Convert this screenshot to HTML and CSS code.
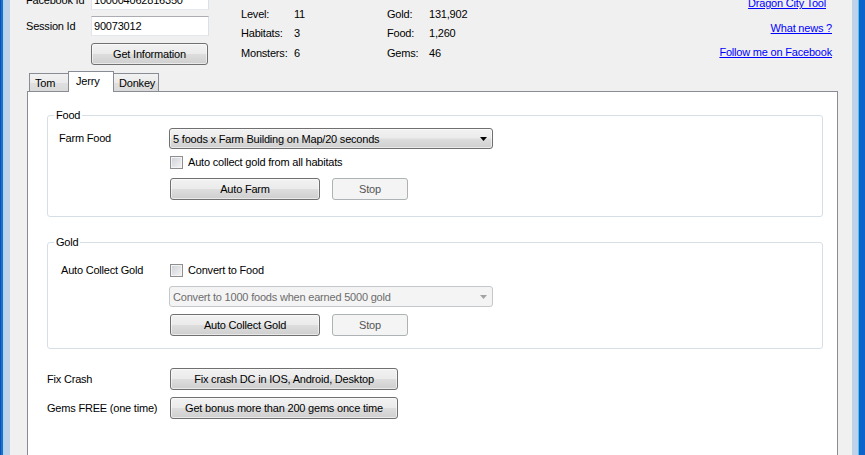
FILE: index.html
```html
<!DOCTYPE html>
<html lang="en">
<head>
    <meta charset="UTF-8">
    <title>Dragon City Tool</title>
    <link rel="stylesheet" href="styles.css">
</head>
<body>
    <div class="window">
        <div class="frame-left"></div>

        <div class="client">
            <!-- account + summary -->
            <div class="top">
                <div class="login">
                    <div class="field">
                        <label for="fbid">Facebook Id</label>
                        <input class="textbox" id="fbid" value="100004062816350">
                    </div>
                    <div class="field">
                        <label for="sid">Session Id</label>
                        <input class="textbox" id="sid" value="90073012">
                    </div>
                    <button class="btn btn-info">Get Information</button>
                </div>

                <div class="stats">
                    <span>Level:</span><span>11</span><span>Gold:</span><span>131,902</span>
                    <span>Habitats:</span><span>3</span><span>Food:</span><span>1,260</span>
                    <span>Monsters:</span><span>6</span><span>Gems:</span><span>46</span>
                </div>

                <div class="links">
                    <a href="#" class="link-tool">Dragon City Tool</a>
                    <a href="#">What news ?</a>
                    <a href="#">Follow me on Facebook</a>
                </div>
            </div>

            <!-- tab control -->
            <div class="tabs">
                <div class="tab-strip">
                    <span class="tab tab-tom">Tom</span>
                    <span class="tab tab-active">Jerry</span>
                    <span class="tab tab-donkey">Donkey</span>
                </div>

                <div class="tab-page">
                    <fieldset class="group group-food">
                        <legend>Food</legend>
                        <div class="row">
                            <span class="row-label label-combo">Farm Food</span>
                            <div class="controls">
                                <div class="combo">
                                    <span>5 foods x Farm Building on Map/20 seconds</span>
                                    <svg width="7" height="4" viewBox="0 0 7 4"><path d="M0 0h7L3.5 4z" fill="#000"/></svg>
                                </div>
                                <label class="check-line check-food"><input type="checkbox" class="check">Auto collect gold from all habitats</label>
                                <div class="buttons">
                                    <button class="btn btn-wide">Auto Farm</button>
                                    <button class="btn btn-stop" disabled>Stop</button>
                                </div>
                            </div>
                        </div>
                    </fieldset>

                    <fieldset class="group group-gold">
                        <legend>Gold</legend>
                        <div class="row">
                            <span class="row-label label-check">Auto Collect Gold</span>
                            <div class="controls">
                                <label class="check-line"><input type="checkbox" class="check">Convert to Food</label>
                                <div class="combo combo-disabled">
                                    <span>Convert to 1000 foods when earned 5000 gold</span>
                                    <svg width="7" height="4" viewBox="0 0 7 4"><path d="M0 0h7L3.5 4z" fill="#a3a3a3"/></svg>
                                </div>
                                <div class="buttons">
                                    <button class="btn btn-wide">Auto Collect Gold</button>
                                    <button class="btn btn-stop" disabled>Stop</button>
                                </div>
                            </div>
                        </div>
                    </fieldset>

                    <div class="extras">
                        <div class="extra-row">
                            <span class="row-label">Fix Crash</span>
                            <button class="btn btn-long">Fix crash DC in IOS, Android, Desktop</button>
                        </div>
                        <div class="extra-row">
                            <span class="row-label">Gems FREE (one time)</span>
                            <button class="btn btn-long">Get bonus more than 200 gems once time</button>
                        </div>
                    </div>
                </div>
            </div>
        </div>

        <div class="frame-right"></div>
    </div>
</body>
</html>
```

FILE: styles.css
```css
body {
    margin: 0;
    overflow: hidden;
    background: #f0f0f0;
    font-family: "Liberation Sans", Arial, sans-serif;
    font-size: 11px;
    letter-spacing: -0.2px;
    color: #000;
}
button, input {
    font: inherit;
    letter-spacing: inherit;
    color: inherit;
    margin: 0;
}

/* window frame */
.window {
    display: flex;
    height: 455px;
    overflow: hidden;
}
.frame-left {
    flex: none;
    width: 10px;
    background: linear-gradient(to right, #0b52b0 0 1px, #1a6fd0 1px 3px, #a6d6f4 3px 4px, #bcd3ea 4px);
}
.frame-right {
    flex: none;
    width: 13px;
    background: linear-gradient(to right, #bcd3ea 0 6px, #4fc4ef 6px 7px, #0d63c9 7px);
}
.client {
    flex: 1;
    min-width: 0;
    background: #f0f0f0;
}

/* top area */
.top {
    display: flex;
    align-items: flex-start;
    height: 81px;
    margin-top: -10px;
    padding: 0 20px 0 16px;
}
.login {
    display: flex;
    flex-direction: column;
    gap: 6px;
}
.field {
    display: flex;
    align-items: center;
}
.field label {
    width: 65px;
}
.textbox {
    box-sizing: border-box;
    width: 118px;
    height: 20px;
    padding: 0 2px;
    border: 1px solid;
    border-color: #abadb3 #dbdfe6 #e3e9ef #e2e3ea;
    background: #fff;
    outline: none;
}
.btn-info {
    width: 117px;
    height: 21px;
    margin: 1px 0 0 65px;
}
.stats {
    display: grid;
    grid-template-columns: 53px 93px 42px auto;
    grid-auto-rows: 19.5px;
    align-items: center;
    margin-left: 32px;
    padding-top: 14px;
}
.links {
    display: flex;
    flex-direction: column;
    align-items: flex-end;
    gap: 5.5px;
    margin-left: auto;
    padding-top: 4px;
    line-height: 19px;
}
.links a {
    color: #0000ff;
}
.link-tool {
    margin-right: 6px;
}

/* buttons, win7 look */
.btn {
    box-sizing: border-box;
    height: 22px;
    padding: 0;
    border: 1px solid #707070;
    border-radius: 3px;
    background: linear-gradient(#f2f2f2 0%, #ebebeb 48%, #dddddd 52%, #cfcfcf 100%);
    box-shadow: inset 0 0 0 1px rgba(255, 255, 255, 0.55);
    text-align: center;
}
.btn:disabled {
    border-color: #adb2b5;
    background: #f4f4f4;
    box-shadow: none;
    color: #555;
}
.btn-wide {
    width: 150px;
}
.btn-stop {
    width: 76px;
}
.btn-long {
    width: 228px;
}

/* tabs */
.tabs {
    margin: 0 14px 0 17px;
}
.tab-strip {
    display: flex;
    align-items: flex-end;
    height: 20px;
    padding-left: 2px;
}
.tab {
    box-sizing: border-box;
    display: flex;
    align-items: center;
    height: 18px;
    padding: 0 0 0 5px;
    border: 1px solid #898c95;
    border-bottom: none;
    background: linear-gradient(#f2f2f2, #ebebeb 50%, #e0e0e0 51%, #dadada);
}
.tab-tom {
    width: 41px;
}
.tab-donkey {
    width: 46px;
}
.tab-active {
    position: relative;
    z-index: 1;
    width: 46px;
    height: 21px;
    margin: 0 -1px -1px -2px;
    padding-left: 7px;
    padding-bottom: 3px;
    background: #fff;
}
.tab-page {
    height: 400px;
    padding: 17px 14px 0 19px;
    border: 1px solid #898c95;
    background: #fff;
}

/* group boxes */
.group {
    margin: 0;
    padding: 0;
    border: 1px solid #d5dfe5;
    border-radius: 3px;
}
.group legend {
    margin-left: 6px;
    padding: 0 2px;
    line-height: 12px;
}
.group-food {
    padding-bottom: 16px;
}
.group-gold {
    margin-top: 19px;
    padding-bottom: 12px;
}
.row {
    display: flex;
    align-items: flex-start;
    padding-left: 11px;
}
.group-food .row {
    margin-top: 7px;
}
.group-gold .row {
    margin-top: 15px;
}
.row-label {
    flex: none;
    width: 111px;
}
.label-combo {
    line-height: 21px;
}
.label-check {
    width: 109px;
    padding-left: 2px;
    line-height: 14px;
}
.controls {
    display: flex;
    flex-direction: column;
    align-items: flex-start;
}
.combo {
    box-sizing: border-box;
    display: flex;
    align-items: center;
    justify-content: space-between;
    width: 324px;
    height: 21px;
    margin-left: -1px;
    padding: 0 5px 0 3px;
    border: 1px solid #707070;
    border-radius: 3px;
    background: linear-gradient(#f2f2f2 0%, #ebebeb 48%, #dddddd 52%, #cfcfcf 100%);
    box-shadow: inset 0 0 0 1px rgba(255, 255, 255, 0.55);
}
.combo-disabled {
    margin-top: 9px;
    border-color: #c5c8ca;
    background: #f4f4f4;
    box-shadow: none;
    color: #6d6d6d;
}
.check-line {
    display: flex;
    align-items: center;
    gap: 5px;
    height: 14px;
}
.check-food {
    margin-top: 6px;
}
.check {
    appearance: none;
    box-sizing: border-box;
    width: 13px;
    height: 13px;
    border: 1px solid #8e8f8f;
    background: linear-gradient(135deg, #cdd0d6, #f5f5f5);
    box-shadow: inset 0 0 0 1px #f4f4f4;
}
.buttons {
    display: flex;
    gap: 12px;
    margin-top: 9px;
}
.group-gold .buttons {
    margin-top: 7px;
}

/* loose rows under the groups */
.extras {
    display: flex;
    flex-direction: column;
    gap: 7px;
    margin-top: 19px;
}
.extra-row {
    display: flex;
    align-items: center;
}
.extra-row .row-label {
    width: 123px;
}
```
